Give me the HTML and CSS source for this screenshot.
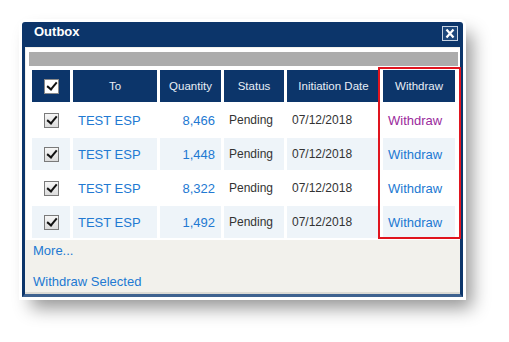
FILE: index.html
```html
<!DOCTYPE html>
<html lang="en">
  <head>
    <meta charset="UTF-8" />
    <title>Outbox</title>
    <link rel="stylesheet" href="styles.css">
  </head>
  <body>
    <div class="window">
      <div class="titlebar">
        <span class="title">Outbox</span>
        <button class="close" type="button" aria-label="Close">
          <svg width="16" height="15" viewBox="0 0 16 15">
            <rect x="0.5" y="0.5" width="15" height="14" fill="#1d477b" stroke="#c8d3e2" />
            <path d="M4.5 3.5 L11.5 11.5 M11.5 3.5 L4.5 11.5" stroke="#fff" stroke-width="2.2" />
          </svg>
        </button>
      </div>

      <div class="panel">
        <div class="panel_bar"></div>
        <table class="outbox">
          <thead>
            <tr>
              <th class="col_check"><span class="check check--head"></span></th>
              <th class="col_to">To</th>
              <th class="col_qty">Quantity</th>
              <th class="col_status">Status</th>
              <th class="col_date">Initiation Date</th>
              <th class="col_withdraw">Withdraw</th>
            </tr>
          </thead>
          <tbody>
            <tr>
              <td class="col_check"><span class="check"></span></td>
              <td><a href="#">TEST ESP</a></td>
              <td class="num"><a href="#">8,466</a></td>
              <td class="text">Pending</td>
              <td class="text">07/12/2018</td>
              <td><a href="#" class="visited">Withdraw</a></td>
            </tr>
            <tr>
              <td class="col_check"><span class="check"></span></td>
              <td><a href="#">TEST ESP</a></td>
              <td class="num"><a href="#">1,448</a></td>
              <td class="text">Pending</td>
              <td class="text">07/12/2018</td>
              <td><a href="#">Withdraw</a></td>
            </tr>
            <tr>
              <td class="col_check"><span class="check"></span></td>
              <td><a href="#">TEST ESP</a></td>
              <td class="num"><a href="#">8,322</a></td>
              <td class="text">Pending</td>
              <td class="text">07/12/2018</td>
              <td><a href="#">Withdraw</a></td>
            </tr>
            <tr>
              <td class="col_check"><span class="check"></span></td>
              <td><a href="#">TEST ESP</a></td>
              <td class="num"><a href="#">1,492</a></td>
              <td class="text">Pending</td>
              <td class="text">07/12/2018</td>
              <td><a href="#">Withdraw</a></td>
            </tr>
          </tbody>
        </table>
      </div>

      <div class="links">
        <a href="#">More...</a>
        <a href="#">Withdraw Selected</a>
      </div>

      <div class="highlight"></div>
    </div>
  </body>
</html>
```

FILE: styles.css
```css
:root {
  --navy: #0c356a;
  --link: #2279d2;
}

* {
  box-sizing: border-box;
}

html,
body {
  min-height: 342px;
}

body {
  margin: 0;
  padding: 22px 0 0 22px;
  background-color: #fff;
  font-family: "Liberation Sans", Arial, sans-serif;
}

.window {
  position: relative;
  display: flex;
  flex-direction: column;
  width: 441px;
  height: 275px;
  background-color: #f2f1ec;
  border: 3px solid var(--navy);
  border-top: 0;
  border-bottom-color: #3e6290;
  border-radius: 3px 3px 0 0;
  box-shadow: inset 0 -2px 0 #dcdbd5, 0 0 0 3px #fff, 9px 11px 18px rgba(0, 0, 0, 0.42);
}

.titlebar {
  display: flex;
  justify-content: space-between;
  align-items: flex-start;
  height: 25px;
  padding: 2px 2px 0 9px;
  background-color: var(--navy);
}

.title {
  color: #fff;
  font-size: 13px;
  font-weight: bold;
  line-height: 15px;
}

.close {
  display: block;
  margin-top: 2px;
  padding: 0;
  border: 0;
  background: none;
  line-height: 0;
}

.panel {
  margin: 1px 0 0 1px;
  padding: 4px 2px 0 3px;
  background-color: #fff;
}

.panel_bar {
  height: 14px;
  background-color: #acacac;
}

.outbox {
  width: 429px;
  margin-top: 2px;
  border-spacing: 3px 2px;
  table-layout: fixed;
  background-color: #fff;
}

.outbox th,
.outbox td {
  height: 32px;
  padding: 0 5px;
  white-space: nowrap;
}

.outbox th {
  background-color: var(--navy);
  color: #e8eef6;
  font-size: 11.5px;
  font-weight: normal;
  text-align: center;
}

.outbox td {
  font-size: 13px;
  text-align: left;
}

.outbox tbody tr:nth-child(even) td {
  background-color: #eef4f9;
}

.col_check { width: 38px; }
.col_to { width: 84px; }
.col_qty { width: 61px; }
.col_status { width: 60px; }
.col_date { width: 93px; }
.col_withdraw { width: 72px; }

.outbox td.col_check {
  text-align: center;
}

.outbox td.num {
  padding-right: 6px;
  text-align: right;
}

.outbox td.text {
  color: #333;
  font-size: 12px;
}

a {
  color: var(--link);
  text-decoration: none;
}

a.visited {
  color: #9a2a9c;
}

.check {
  position: relative;
  display: inline-block;
  width: 15px;
  height: 15px;
  vertical-align: middle;
  border: 1.5px solid #7a7a7a;
  background: linear-gradient(#f6f6f6, #dcdcdc);
}

.check--head {
  background: #fff;
  border-color: #8a8a8a;
}

.check::after {
  content: "";
  position: absolute;
  left: 4px;
  top: 0px;
  width: 4px;
  height: 8px;
  border: solid #111;
  border-width: 0 2.5px 2.5px 0;
  transform: rotate(40deg);
}

.links {
  display: flex;
  flex-direction: column;
  gap: 15px;
  padding: 3px 0 0 8px;
  font-size: 13px;
  line-height: 16px;
}

.links a {
  align-self: flex-start;
}

.highlight {
  position: absolute;
  left: 353px;
  top: 45px;
  width: 83px;
  height: 172px;
  border: 2px solid #e0141e;
  pointer-events: none;
}
```
